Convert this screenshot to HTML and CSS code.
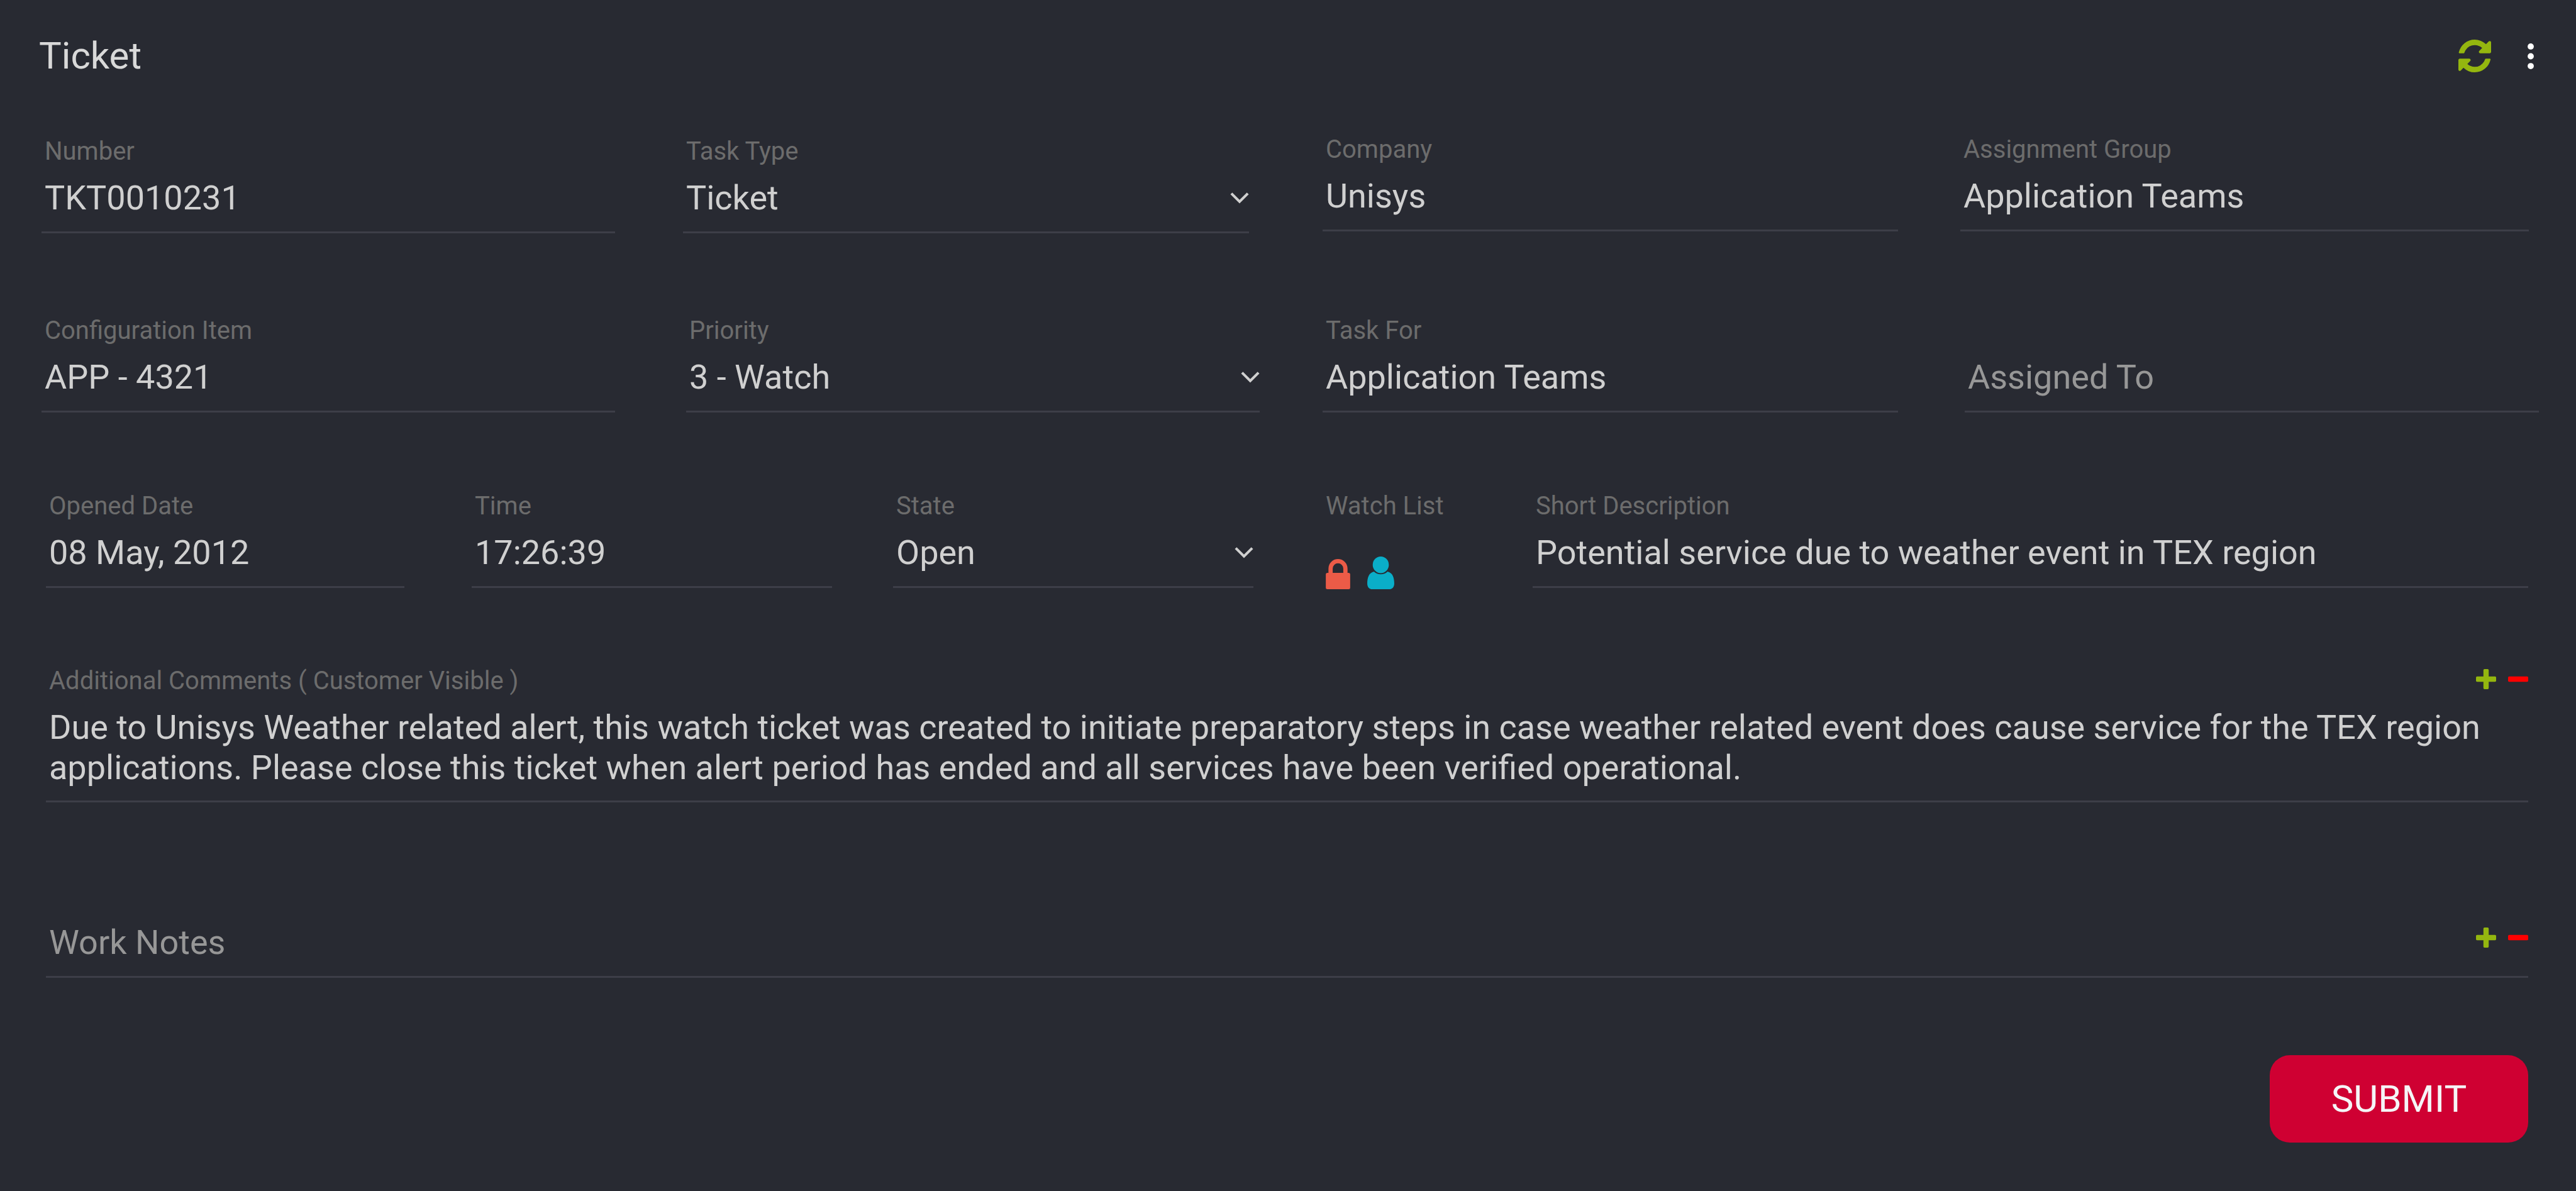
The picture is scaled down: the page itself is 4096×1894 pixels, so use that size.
FILE: index.html
```
<!DOCTYPE html>
<html lang="en">
<head>
<meta charset="utf-8">
<title>Ticket</title>
<link rel="stylesheet" href="styles.css">
</head>
<body>
<form class="ticket">
  <header class="bar">
    <h1 class="title">Ticket</h1>
    <div class="tools">
      <button type="button" class="icon-button" aria-label="Refresh">
        <svg class="refresh" viewBox="0 0 1536 1536"><path d="M1511 928q0 5-1 7-64 268-268 434.500T764 1536q-146 0-282.500-55T238 1324l-129 129q-19 19-45 19t-45-19-19-45V960q0-26 19-45t45-19h448q26 0 45 19t19 45-19 45l-137 137q71 66 161 102t187 36q134 0 250-65t186-179q11-17 53-117 8-23 30-23h192q13 0 22.500 9.500t9.500 22.500zm25-800v448q0 26-19 45t-45 19h-448q-26 0-45-19t-19-45 19-45l138-138Q969 256 768 256q-134 0-250 65T332 500q-11 17-53 117-8 23-30 23H50q-13 0-22.500-9.500T18 608v-7q65-268 270-434.500T768 0q146 0 284 55.500T1297 212l130-129q19-19 45-19t45 19 19 45z"/></svg>
      </button>
      <button type="button" class="icon-button" aria-label="More options">
        <svg class="more" viewBox="0 0 12 50"><circle cx="6" cy="6" r="6"/><circle cx="6" cy="25" r="6"/><circle cx="6" cy="44" r="6"/></svg>
      </button>
    </div>
  </header>

  <div class="row row-first">
    <div class="field"><label for="number">Number</label><input id="number" value="TKT0010231"></div>
    <div class="field picker"><label for="type">Task Type</label><select id="type"><option>Ticket</option></select><svg class="chevron" viewBox="0 0 36 22"><path d="M2 2l16 16L34 2"/></svg></div>
    <div class="field raised"><label for="company">Company</label><input id="company" value="Unisys"></div>
    <div class="field raised"><label for="group">Assignment Group</label><input id="group" value="Application Teams"></div>
  </div>

  <div class="row row-second">
    <div class="field"><label for="item">Configuration Item</label><input id="item" value="APP - 4321"></div>
    <div class="field picker"><label for="priority">Priority</label><select id="priority"><option>3 - Watch</option></select><svg class="chevron" viewBox="0 0 36 22"><path d="M2 2l16 16L34 2"/></svg></div>
    <div class="field"><label for="for">Task For</label><input id="for" value="Application Teams"></div>
    <div class="field"><input id="assigned" aria-label="Assigned To" placeholder="Assigned To"></div>
  </div>

  <div class="row row-third">
    <div class="field"><label for="date">Opened Date</label><input id="date" value="08 May, 2012"></div>
    <div class="field"><label for="time">Time</label><input id="time" value="17:26:39"></div>
    <div class="field picker"><label for="state">State</label><select id="state"><option>Open</option></select><svg class="chevron" viewBox="0 0 36 22"><path d="M2 2l16 16L34 2"/></svg></div>
    <div class="watch">
      <span class="caption">Watch List</span>
      <div class="watchers">
        <svg class="lock" viewBox="0 0 46 57"><path fill-rule="evenodd" d="M5 26V18a18 18 0 0 1 36 0v8h2q3 0 3 3v25q0 3-3 3H3q-3 0-3-3V29q0-3 3-3zm8 0h20V18a10 10 0 0 0-20 0z"/></svg>
        <svg class="person" viewBox="0 0 52 63"><ellipse cx="26" cy="16" rx="15.500" ry="16"/><path d="M13 29C3 31 0 41 0 52c0 7 4 11 10 11h32c6 0 10-4 10-11 0-11-3-21-13-23-7 7-19 7-26 0z"/></svg>
      </div>
    </div>
    <div class="field"><label for="short">Short Description</label><input id="short" value="Potential service due to weather event in TEX region"></div>
  </div>

  <div class="row row-note">
    <div class="field">
      <div class="note-head">
        <label for="comments">Additional Comments ( Customer Visible )</label>
        <div class="adjust">
          <button type="button" class="icon-button" aria-label="Add comment"><svg class="sign plus" viewBox="0 0 38 38"><path d="M16 0h6q2 0 2 2v12h12q2 0 2 2v6q0 2-2 2H24v12q0 2-2 2h-6q-2 0-2-2V24H2q-2 0-2-2v-6q0-2 2-2h12V2q0-2 2-2z"/></svg></button>
          <button type="button" class="icon-button" aria-label="Remove comment"><svg class="sign minus" viewBox="0 0 38 38"><rect y="14" width="38" height="10" rx="2"/></svg></button>
        </div>
      </div>
      <textarea id="comments" rows="2">Due to Unisys Weather related alert, this watch ticket was created to initiate preparatory steps in case weather related event does cause service for the TEX region applications. Please close this ticket when alert period has ended and all services have been verified operational.</textarea>
    </div>
  </div>

  <div class="row row-work">
    <div class="field work">
      <input id="work" aria-label="Work Notes" placeholder="Work Notes">
      <div class="adjust">
        <button type="button" class="icon-button" aria-label="Add note"><svg class="sign plus" viewBox="0 0 38 38"><path d="M16 0h6q2 0 2 2v12h12q2 0 2 2v6q0 2-2 2H24v12q0 2-2 2h-6q-2 0-2-2V24H2q-2 0-2-2v-6q0-2 2-2h12V2q0-2 2-2z"/></svg></button>
        <button type="button" class="icon-button" aria-label="Remove note"><svg class="sign minus" viewBox="0 0 38 38"><rect y="14" width="38" height="10" rx="2"/></svg></button>
      </div>
    </div>
  </div>

  <footer class="actions"><button type="submit" class="submit">SUBMIT</button></footer>
</form>
</body>
</html>
```
FILE: styles.css
```
* { box-sizing: border-box; }

body {
  margin: 0;
  min-height: 100vh;
  background: #282a32;
  color: #d0d0d0;
  font-family: Roboto, "Liberation Sans", sans-serif;
}

input, select, textarea, button {
  margin: 0;
  padding: 0;
  border: 0;
  border-radius: 0;
  outline: 0;
  background: none;
  color: inherit;
  font: inherit;
  appearance: none;
}

svg { display: block; }

.bar {
  display: flex;
  align-items: center;
  justify-content: space-between;
  height: 178px;
  padding: 0 67px 0 62px;
}

.title {
  margin: 0;
  color: #d9d9d9;
  font-size: 60px;
  font-weight: 400;
  line-height: 72px;
}

.tools { display: flex; align-items: center; gap: 58px; }
.icon-button { cursor: pointer; }
.refresh { width: 52px; height: 52px; fill: #94b60f; }
.more { width: 10px; height: 41px; fill: #fff; }

/* Fields sit on the odd tracks; the even tracks are the gutters. */
.row { display: grid; align-items: end; padding: 0 76px 0 73px; }
.row > :nth-child(1) { grid-column: 1; }
.row > :nth-child(2) { grid-column: 3; }
.row > :nth-child(3) { grid-column: 5; }
.row > :nth-child(4) { grid-column: 7; }
.row > :nth-child(5) { grid-column: 9; }

.row-first {
  grid-template-columns: 912fr 108fr 900fr 117fr 915fr 99fr 904fr;
  height: 193px;
  padding: 0 75px 0 66px;
}
.row-second {
  grid-template-columns: 912fr 113fr 912fr 100fr 915fr 106fr 913fr;
  height: 285px;
  padding: 0 59px 0 66px;
}
.row-third {
  grid-template-columns: 570fr 107fr 573fr 97fr 573fr 115fr 230fr 99fr 1583fr;
  height: 279px;
}
.row-note { height: 341px; }
.row-work { height: 279px; }

.field {
  display: flex;
  flex-direction: column;
  min-width: 0;
  border-bottom: 3px solid #3d3e48;
}

.raised { margin-bottom: 3px; }

label, .caption {
  padding-left: 5px;
  color: #6c6c6c;
  font-size: 40px;
  line-height: 48px;
}

.field input, .field select {
  width: 100%;
  height: 103px;
  padding: 0 5px 5px;
  font-size: 54px;
}

::placeholder { color: #979797; opacity: 1; }

.picker { position: relative; }
.chevron {
  position: absolute;
  right: 0;
  bottom: 44px;
  width: 30px;
  height: 18px;
  fill: none;
  stroke: #d0d0d0;
  stroke-width: 5;
  pointer-events: none;
}

.watch { height: 154px; }
.caption { display: block; padding: 0; white-space: nowrap; }
.watchers { display: flex; align-items: flex-end; gap: 27px; padding-top: 56px; }
.lock { width: 39px; height: 48px; fill: #eb5b47; }
.person { width: 43px; height: 52px; fill: #0aaec8; }

.note-head { display: flex; align-items: flex-start; justify-content: space-between; }
.adjust { display: flex; align-items: center; gap: 19px; height: 42px; }
.sign { width: 32px; height: 32px; }
.plus { fill: #94b60f; }
.minus { fill: #f00; }

.field textarea {
  display: block;
  height: 166px;
  padding: 18px 5px 0;
  overflow: hidden;
  font-size: 54px;
  line-height: 64px;
  resize: none;
}

.work { flex-direction: row; align-items: flex-start; }
.work .adjust { margin-top: 21px; }

.actions { display: flex; justify-content: flex-end; padding: 123px 76px 0 0; }
.submit {
  width: 411px;
  height: 139px;
  border-radius: 32px;
  background: #cf0032;
  color: #f5f5f7;
  font-size: 60px;
}
```
